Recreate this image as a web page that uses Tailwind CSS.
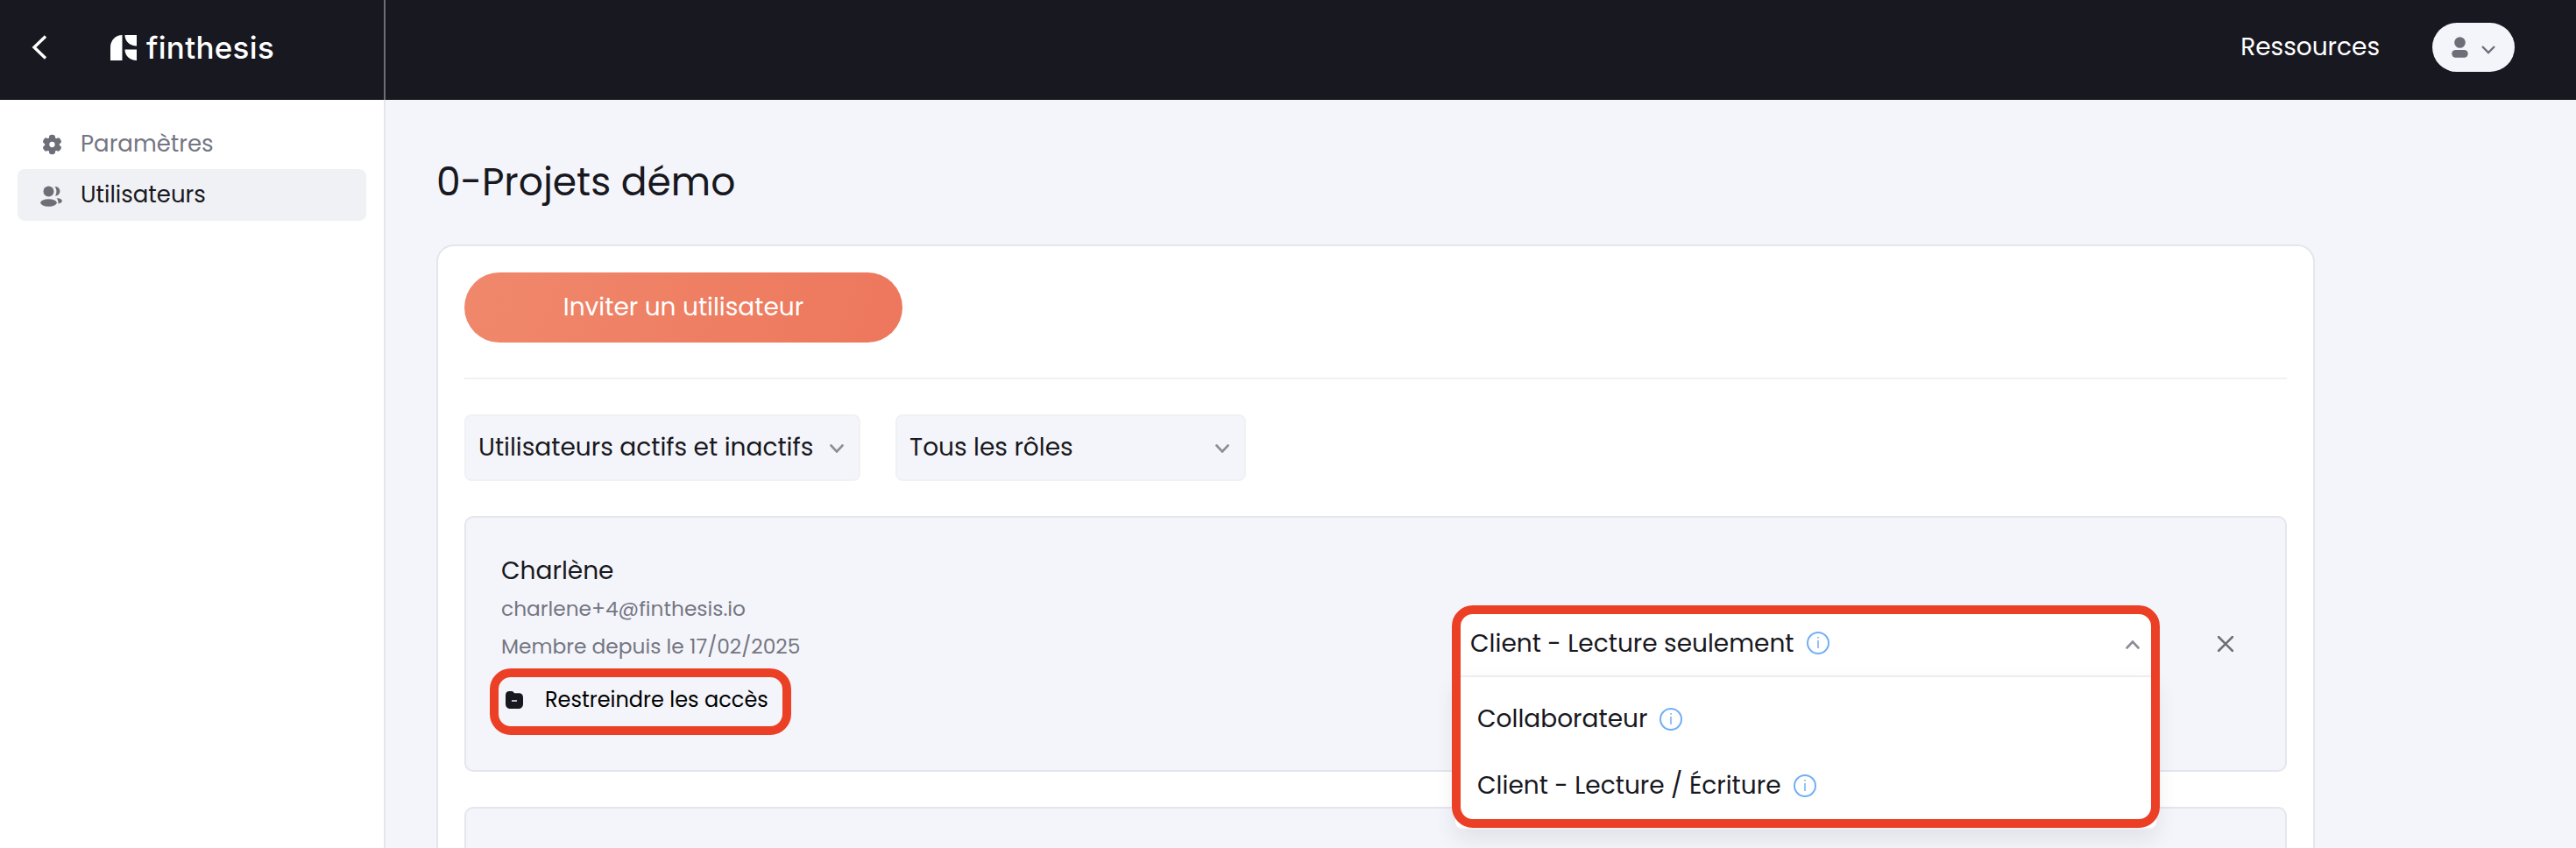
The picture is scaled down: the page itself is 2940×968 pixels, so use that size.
<!DOCTYPE html>
<html lang="fr">
<head>
  <meta charset="utf-8">
  <title>finthesis - Utilisateurs</title>
  <script src="https://cdn.jsdelivr.net/npm/@tailwindcss/browser@4"></script>
</head>
<body class="w-[2940px] h-[968px] overflow-hidden bg-[#f4f5fa] font-[Poppins,Inter,sans-serif] text-[#181820] whitespace-nowrap">
  <!--Top bar-->
  <header class="flex h-[114px] bg-[#181820] text-white">
    <div class="flex items-center w-[440px] h-full pb-1.5 pl-9 border-r-2 border-[#6d6e78]">
      <svg class="w-[18px] h-7" viewBox="0 0 18 28" fill="none" stroke="currentColor" stroke-width="3.4"><path d="M16 1.5 3 14l13 12.500"/></svg>
      <svg class="w-[30px] h-[29px] ml-[72px]" viewBox="0 0 30 29" fill="currentColor"><path d="M0 29V14C0 6 6 0 13.500 0V29ZM16.500 0H30V12.500C22.500 12.500 16.500 7.500 16.500 0ZM16.500 16.500H30V29C22.500 29 16.500 24 16.500 16.500Z"/></svg>
      <span class="ml-[11px] font-[Inter] text-[35px] font-medium tracking-[0.3px]">finthesis</span>
    </div>
    <div class="flex flex-1 items-center justify-end h-[108px] pr-[70px]">
      <a href="#" class="text-[28px]">Ressources</a>
      <button class="flex items-center w-[94px] h-14 ml-[60px] pl-[22px] rounded-full bg-[#f4f5fa] text-[#6d6e78]">
        <svg class="w-[19px] h-6" viewBox="0 0 19 24" fill="currentColor"><circle cx="9.500" cy="6.500" r="6.300"/><rect x=".3" y="15" width="18.400" height="8.800" rx="4.200"/></svg>
        <svg class="w-4 h-2.5 ml-[15px] mt-1.5" viewBox="0 0 16 10" fill="none" stroke="currentColor" stroke-width="2.400"><path d="m1 1 7 7 7-7"/></svg>
      </button>
    </div>
  </header>

  <div class="flex h-[854px] overflow-hidden">
    <!--Sidebar-->
    <aside class="w-[440px] px-5 pt-5 bg-white border-r-2 border-[#e4e6ee] text-[26px]">
      <a href="#" class="flex items-center h-[59px] pl-7 text-[#6d6e78]">
        <svg class="w-[23px] h-6 mt-[3px]" viewBox="0 0 24 24" fill="currentColor">
          <circle cx="12" cy="12" r="8.700"/>
          <rect x="8.300" y=".3" width="7.400" height="23.400" rx="3.400"/>
          <rect x="8.300" y=".3" width="7.400" height="23.400" rx="3.400" transform="rotate(60 12 12)"/>
          <rect x="8.300" y=".3" width="7.400" height="23.400" rx="3.400" transform="rotate(120 12 12)"/>
          <circle cx="12" cy="12" r="3.300" fill="#fff"/>
        </svg>
        <span class="ml-[21px] pt-px text-[#747683]">Paramètres</span>
      </a>
      <a href="#" class="flex items-center h-[59px] pl-[26px] rounded-lg bg-[#f0f1f5]">
        <svg class="w-[26px] h-6 mt-[3px] text-[#6d6e78]" viewBox="0 0 26 24" fill="currentColor"><circle cx="9.500" cy="6.500" r="6"/><ellipse cx="9.500" cy="19.500" rx="9.300" ry="4.200"/><path d="M16.500 1c7.500-.5 8 10 .5 10.500 2-3 2-7.500-.5-10.500ZM18.500 14.200c7-.5 9 4.800 2 6.300 0-2.500 0-4.500-2-6.300Z"/></svg>
        <span class="ml-5">Utilisateurs</span>
      </a>
    </aside>

    <!--Content-->
    <main class="flex-1 pl-[58px] pt-[62px]">
      <h1 class="h-[60px] pt-0.5 text-[44px] leading-[60px]">0-Projets démo</h1>
      <section class="w-[2144px] h-[760px] mt-[43px] p-[30px] bg-white border-2 border-[#e4e6ee] rounded-[20px]">
        <button class="w-[500px] h-20 rounded-full bg-linear-110 from-[#f0886c] to-[#ed775c] text-[28px] text-white">Inviter un utilisateur</button>
        <hr class="my-10 border-t-2 border-[#f0f1f5]">
        <div class="flex gap-10 text-[28px]">
          <div class="flex items-center justify-between w-[452px] h-[76px] pl-[14px] pr-[17px] rounded-lg bg-[#f4f5fa] border-2 border-[#f0f1f5]">
            <span>Utilisateurs actifs et inactifs</span>
            <svg class="w-4 h-2.5 mt-0.5 text-[#8c8d96]" viewBox="0 0 16 10" fill="none" stroke="currentColor" stroke-width="2.600" stroke-linecap="round"><path d="m1.500 1.500 6.500 7 6.500-7"/></svg>
          </div>
          <div class="flex items-center justify-between w-[400px] h-[76px] pl-[14px] pr-[17px] rounded-lg bg-[#f4f5fa] border-2 border-[#f0f1f5]">
            <span>Tous les rôles</span>
            <svg class="w-4 h-2.5 mt-0.5 text-[#8c8d96]" viewBox="0 0 16 10" fill="none" stroke="currentColor" stroke-width="2.600" stroke-linecap="round"><path d="m1.500 1.500 6.500 7 6.500-7"/></svg>
          </div>
        </div>

        <!--User row-->
        <article class="relative z-10 h-[292px] mt-10 pl-10 pt-[39px] rounded-[10px] bg-[#f4f5fa] border-2 border-[#e4e6ee]">
          <h2 class="text-[28px] leading-[43px]">Charlène</h2>
          <p class="h-[43px] pt-px text-[23.3px] leading-[43px] text-[#747683]">charlene+4@finthesis.io</p>
          <p class="h-[43px] pt-px text-[23.3px] leading-[43px] text-[#747683]">Membre depuis le 17/02/2025</p>
          <button class="flex items-center w-[344px] h-[76px] mt-1 -ml-[13px] pl-2 pb-1 border-10 border-[#eb4025] rounded-3xl text-2xl text-black">
            <svg class="w-5 h-5" viewBox="0 0 20 20" fill="#181820" fill-rule="evenodd"><path d="M0 5C0 1.500 1.500 0 4.500 0 8 0 8.500 0 10 2.300h4.500C18.500 2.300 20 4 20 7.500V14c0 4-2 6-6 6H6c-4 0-6-2-6-6ZM7 10.200v1.600h6v-1.600Z"/></svg>
            <span class="ml-[25px]">Restreindre les accès</span>
          </button>

          <!--Close-->
          <svg class="absolute left-[1999px] top-[135px] w-[18px] h-[18px] text-[#6d6e78]" viewBox="0 0 18 18" fill="none" stroke="currentColor" stroke-width="2.600" stroke-linecap="round"><path d="m1 1 16 16M17 1 1 17"/></svg>

          <!--Role menu-->
          <div class="absolute left-[1129px] top-[104px] w-[800px] text-[28px]">
            <div class="flex items-center h-[78px] pt-[3px] pl-[17px] pr-[19px] rounded-t-lg bg-white border-b-2 border-[#f0f1f5]">
              <span>Client - Lecture seulement</span>
              <svg class="w-[26px] h-[26px] ml-3.5 -mt-px text-[#72aef5]" viewBox="0 0 26 26" fill="none" stroke="currentColor"><circle cx="13" cy="13" r="12" stroke-width="2"/><path d="M13 10v9M13 6v1.800" stroke-width="1.500"/></svg>
              <svg class="w-4 h-2.5 ml-auto mt-0.5 text-[#8c8d96]" viewBox="0 0 16 10" fill="none" stroke="currentColor" stroke-width="2.600" stroke-linecap="round"><path d="m1.500 8.500 6.500-7 6.500 7"/></svg>
            </div>
            <div class="h-[174px] pt-2.5 pl-[25px] rounded-b-lg bg-white border-b-2 border-[#f0f1f5] shadow-[0_10px_26px_rgba(24,24,32,0.09)]">
              <div class="flex items-center h-[76px]">
                <span>Collaborateur</span>
                <svg class="w-[26px] h-[26px] ml-3.5 -mt-px text-[#72aef5]" viewBox="0 0 26 26" fill="none" stroke="currentColor"><circle cx="13" cy="13" r="12" stroke-width="2"/><path d="M13 10v9M13 6v1.800" stroke-width="1.500"/></svg>
              </div>
              <div class="flex items-center h-[76px]">
                <span>Client - Lecture / Écriture</span>
                <svg class="w-[26px] h-[26px] ml-3.5 -mt-px text-[#72aef5]" viewBox="0 0 26 26" fill="none" stroke="currentColor"><circle cx="13" cy="13" r="12" stroke-width="2"/><path d="M13 10v9M13 6v1.800" stroke-width="1.500"/></svg>
              </div>
            </div>
            <div class="absolute -left-1 -top-1 w-[808px] h-[254px] border-10 border-[#eb4025] rounded-3xl"></div>
          </div>
        </article>
        <article class="h-[292px] mt-10 rounded-[10px] bg-[#f4f5fa] border-2 border-[#e4e6ee]"></article>
      </section>
    </main>
  </div>
</body>
</html>
